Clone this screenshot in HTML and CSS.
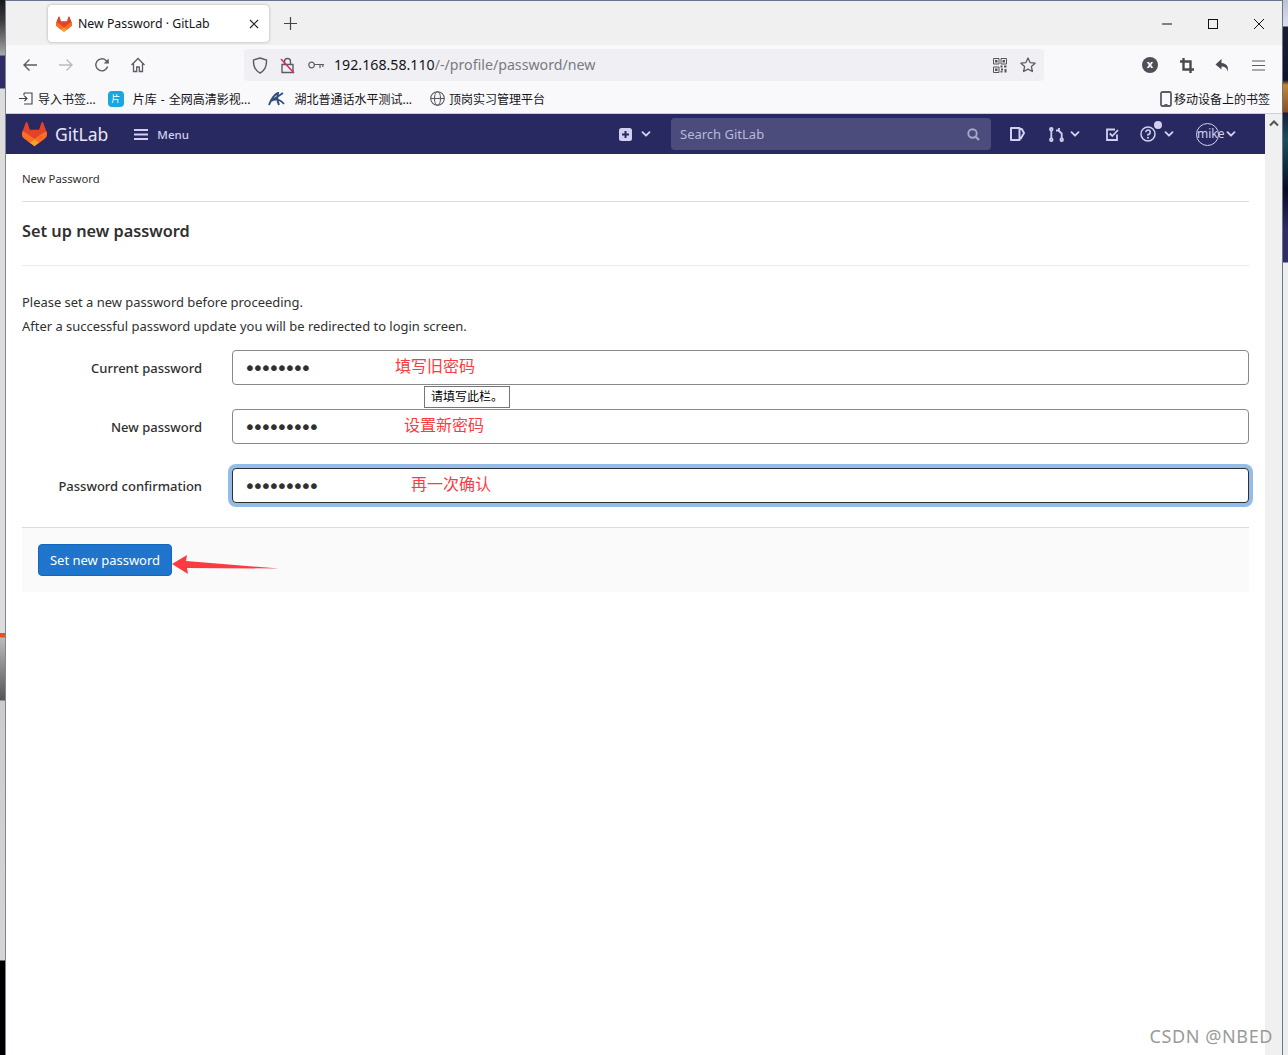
FILE: index.html
```html
<!DOCTYPE html>
<html lang="en">
<head>
  <meta charset="UTF-8" />
  <meta name="viewport" content="width=device-width, initial-scale=1.0"/>
  <title>New Password · GitLab</title>
  <link rel="stylesheet" href="styles.css">
</head>
<body>
  <svg class="defs" width="0" height="0">
    <symbol id="tanuki" viewBox="0 0 25 24">
      <path fill="#E24329" d="M24.507 9.5l-.034-.09L21.082.562a.896.896 0 00-1.694.091l-2.29 7.01H7.825L5.535.653a.898.898 0 00-1.694-.09L.451 9.411.416 9.5a6.297 6.297 0 002.09 7.278l.012.01.03.022 5.16 3.867 2.56 1.935 1.554 1.176a1.051 1.051 0 001.268 0l1.555-1.176 2.56-1.935 5.197-3.89.014-.01A6.297 6.297 0 0024.507 9.5z"/>
      <path fill="#FC6D26" d="M24.507 9.5l-.034-.09a11.44 11.44 0 00-4.56 2.051l-7.447 5.632 4.742 3.584 5.197-3.89.014-.01A6.297 6.297 0 0024.507 9.5z"/>
      <path fill="#FCA326" d="M7.707 20.677l2.56 1.935 1.555 1.176a1.051 1.051 0 001.268 0l1.555-1.176 2.56-1.935-4.743-3.584-4.755 3.584z"/>
      <path fill="#FC6D26" d="M5.01 11.461a11.43 11.43 0 00-4.56-2.05L.416 9.5a6.297 6.297 0 002.09 7.278l.012.01.03.022 5.16 3.867 4.745-3.584-7.444-5.632z"/>
    </symbol>
    <symbol id="chev" viewBox="0 0 10 10">
      <path d="M1.5 3.2L5 6.7l3.5-3.5" fill="none" stroke="currentColor" stroke-width="1.9" stroke-linecap="round" stroke-linejoin="round"/>
    </symbol>
  </svg>

  <div class="desktop">
    <div class="strip strip-left"></div>

    <div class="window">
      <!-- tab strip -->
      <div class="tabbar">
        <div class="tab">
          <svg class="tab-logo" width="16" height="16"><use href="#tanuki"/></svg>
          <span class="tab-title">New Password · GitLab</span>
          <svg class="tab-close" width="10" height="10" viewBox="0 0 10 10"><path d="M1 1l8 8M9 1l-8 8" stroke="#222" stroke-width="1.1"/></svg>
        </div>
        <svg class="new-tab" width="13" height="13" viewBox="0 0 13 13"><path d="M6.5 0v13M0 6.5h13" stroke="#444" stroke-width="1.2"/></svg>
        <div class="win-btns">
          <svg width="10" height="10" viewBox="0 0 10 10"><path d="M0 5h10" stroke="#111" stroke-width="1"/></svg>
          <svg width="10" height="10" viewBox="0 0 10 10"><rect x=".5" y=".5" width="9" height="9" fill="none" stroke="#111"/></svg>
          <svg width="10" height="10" viewBox="0 0 10 10"><path d="M0 0l10 10M10 0L0 10" stroke="#111" stroke-width="1"/></svg>
        </div>
      </div>

      <!-- toolbar -->
      <div class="toolbar">
        <div class="nav-btns">
          <svg width="16" height="16" viewBox="0 0 16 16"><path d="M15 8H2M7.5 2.5L2 8l5.5 5.5" fill="none" stroke="#5b5b66" stroke-width="1.4"/></svg>
          <svg width="16" height="16" viewBox="0 0 16 16"><path d="M1 8h13M8.500 2.500L14 8l-5.500 5.500" fill="none" stroke="#b9b9c0" stroke-width="1.4"/></svg>
          <svg width="16" height="16" viewBox="0 0 16 16"><path d="M13.600 9.500A6 6 0 1 1 12 3.500L14.500 6" fill="none" stroke="#5b5b66" stroke-width="1.4"/><path d="M14.700 1.500v5h-5z" fill="#5b5b66"/></svg>
          <svg width="16" height="16" viewBox="0 0 16 16"><path d="M1.500 8L8 1.500 14.500 8M3.500 6.500V14.500h3.200V10h2.600v4.500h3.200V6.500" fill="none" stroke="#5b5b66" stroke-width="1.3"/></svg>
        </div>
        <div class="urlbar">
          <svg width="16" height="17" viewBox="0 0 16 17"><path d="M8 1l6.500 2c.3 5.500-1.500 10.500-6.500 13C3 13.500 1.200 8.500 1.500 3z" fill="none" stroke="#5b5b66" stroke-width="1.4"/></svg>
          <svg class="url-lock" width="15" height="17" viewBox="0 0 15 17"><path d="M4.500 7V4.500a3 3 0 0 1 6 0V7M2 7.500h11v8H2z" fill="none" stroke="#5b5b66" stroke-width="1.4"/><path d="M1 2l13 14" stroke="#e22850" stroke-width="1.5"/></svg>
          <svg class="url-key" width="16" height="8" viewBox="0 0 16 8"><circle cx="3.600" cy="4" r="2.800" fill="none" stroke="#5b5b66" stroke-width="1.200"/><path d="M6.500 3.500H16M12 3.500V7M14.800 3.500V6" fill="none" stroke="#5b5b66" stroke-width="1.200"/></svg>
          <span class="url-text">192.168.58.110<span class="url-path">/-/profile/password/new</span></span>
          <svg class="url-qr" width="14" height="15" viewBox="0 0 14 15">
            <path d="M.5.5h5.500v5.500H.5zM8 .5h5.500v5.500H8zM.5 9h5.500v5.500H.5z" fill="none" stroke="#555" stroke-width="1"/>
            <path d="M2 2h2.500v2.500H2zM9.500 2H12v2.500H9.500zM2 10.500h2.500V13H2zM7.500 7.500h2v2h-2zM11 7.500h2.500v2H11zM8 10.500h2v2H8zM11.500 11h2v3.500h-2zM7.500 13h2v1.500h-2z" fill="#555"/>
          </svg>
          <svg class="url-star" width="16" height="16" viewBox="0 0 16 16"><path d="M8 1l2.100 4.600 5 .6-3.700 3.400 1 4.900L8 12.100l-4.400 2.400 1-4.900L.9 6.200l5-.6z" fill="none" stroke="#5b5b66" stroke-width="1.3" stroke-linejoin="round"/></svg>
        </div>
        <div class="tool-btns">
          <span class="ext-x">x</span>
          <svg width="14" height="15" viewBox="0 0 14 15"><path d="M3.500 0v11.500H14M0 3.500h10.500V15" fill="none" stroke="#4a4a52" stroke-width="2.400"/></svg>
          <svg width="15" height="15" viewBox="0 0 15 15"><path d="M6.500 1L.5 6.500l6 5V8.500c3.500 0 5.500 1.500 6 5 1.500-4.500-.5-8-6-8.500z" fill="#4a4a52"/></svg>
          <svg width="13" height="11" viewBox="0 0 13 11"><path d="M0 1h13M0 5.500h13M0 10h13" stroke="#5b5b66" stroke-width="1.200"/></svg>
        </div>
      </div>

      <!-- bookmarks -->
      <div class="bookmarks">
        <a class="bm bm-import">
          <svg width="14" height="13" viewBox="0 0 14 13"><path d="M5 1h8v11H5M5 3.500V1M0 6.500h8M5.500 4l2.500 2.500L5.500 9" fill="none" stroke="#444" stroke-width="1.100"/></svg>
          导入书签...
        </a>
        <a class="bm bm-film">
          <span class="bm-pk">片</span>
          片库 - 全网高清影视...
        </a>
        <a class="bm">
          <svg width="17" height="14" viewBox="0 0 17 14"><path d="M1 13C3 7 7 2 10 1c-1 4-1 8 1 12M15 1L3 9c4-2 9-2 13 3" fill="none" stroke="#2f4f7f" stroke-width="1.900"/></svg>
          湖北普通话水平测试...
        </a>
        <a class="bm bm-intern">
          <svg width="15" height="15" viewBox="0 0 15 15"><g fill="none" stroke="#5b5b66" stroke-width="1.100"><circle cx="7.500" cy="7.500" r="6.800"/><ellipse cx="7.500" cy="7.500" rx="3" ry="6.800"/><path d="M.7 7.500h13.600"/></g></svg>
          顶岗实习管理平台
        </a>
        <a class="bm bm-mobile">
          <svg width="12" height="16" viewBox="0 0 12 16"><rect x="1" y="1" width="10" height="14" rx="1.500" fill="none" stroke="#5b5b66" stroke-width="1.800"/><path d="M4.500 13.500h3" stroke="#5b5b66"/></svg>
          移动设备上的书签
        </a>
      </div>

      <div class="viewport">
        <div class="page">
          <!-- gitlab navbar -->
          <header class="navbar">
            <div class="brand">
              <svg width="25" height="24"><use href="#tanuki"/></svg>
              <span class="brand-name">GitLab</span>
            </div>
            <div class="menu">
              <svg width="14" height="11" viewBox="0 0 14 11"><path d="M0 1h14M0 5.500h14M0 10h14" stroke="#d1d0f0" stroke-width="2"/></svg>
              <span>Menu</span>
            </div>
            <div class="nav-right">
              <div class="nav-item create">
                <svg width="13" height="13" viewBox="0 0 13 13"><rect width="13" height="13" rx="2.500" fill="#d1d0f0"/><path d="M6.500 3v7M3 6.500h7" stroke="#292961" stroke-width="2"/></svg>
                <svg class="chev" width="10" height="10"><use href="#chev"/></svg>
              </div>
              <div class="search">
                <span>Search GitLab</span>
                <svg width="13" height="13" viewBox="0 0 13 13"><circle cx="5.500" cy="5.500" r="4.200" fill="none" stroke="#a9a8c8" stroke-width="1.900"/><path d="M8.700 8.700L12 12" stroke="#a9a8c8" stroke-width="2.200"/></svg>
              </div>
              <svg class="nav-issue" width="15" height="14" viewBox="0 0 15 14"><path d="M1 1h8.500v12H1zM9.500 2h2.300L14 6l-3.500 6" fill="none" stroke="#d1d0f0" stroke-width="2" stroke-linejoin="round"/></svg>
              <div class="nav-item mr">
                <svg width="15" height="15" viewBox="0 0 15 15"><g fill="none" stroke="#d1d0f0" stroke-width="1.800"><circle cx="2.300" cy="2.300" r="1.300"/><circle cx="2.300" cy="12.700" r="1.300"/><circle cx="12.700" cy="12.700" r="1.300"/><path d="M2.300 4v7M12.700 11V6.500L9.500 3.500M7 3.500h3V1"/></g></svg>
                <svg class="chev" width="10" height="10"><use href="#chev"/></svg>
              </div>
              <svg class="nav-todo" width="13" height="13" viewBox="0 0 13 13"><path d="M11 6.500V12H1V1.500h8" fill="none" stroke="#d1d0f0" stroke-width="1.800"/><path d="M3.800 5.500l2.500 2.500L12 2" fill="none" stroke="#d1d0f0" stroke-width="1.800"/></svg>
              <div class="nav-item help">
                <svg width="16" height="16" viewBox="0 0 16 16"><circle cx="8" cy="8" r="7" fill="none" stroke="#d1d0f0" stroke-width="1.500"/><path d="M5.800 6.300A2.200 2.200 0 1 1 8 8.500v1.200" fill="none" stroke="#d1d0f0" stroke-width="1.500"/><circle cx="8" cy="11.700" r="1" fill="#d1d0f0"/></svg>
                <span class="help-dot"></span>
                <svg class="chev" width="10" height="10"><use href="#chev"/></svg>
              </div>
              <div class="nav-item user">
                <span class="avatar">mike</span>
                <svg class="chev" width="10" height="10"><use href="#chev"/></svg>
              </div>
            </div>
          </header>

          <main class="content">
            <div class="breadcrumb">New Password</div>
            <h1 class="page-title">Set up new password</h1>
            <p class="intro">Please set a new password before proceeding.<br>After a successful password update you will be redirected to login screen.</p>

            <form class="pw-form">
              <div class="field">
                <label for="cur">Current password</label>
                <input id="cur" type="password" value="12345678">
              </div>
              <div class="field">
                <label for="new">New password</label>
                <input id="new" type="password" value="123456789">
              </div>
              <div class="field">
                <label for="conf">Password confirmation</label>
                <input id="conf" class="focused" type="password" value="123456789">
              </div>
              <div class="form-actions">
                <button type="button" class="btn-primary">Set new password</button>
              </div>

              <span class="note note-1">填写旧密码</span>
              <span class="note note-2">设置新密码</span>
              <span class="note note-3">再一次确认</span>
              <span class="tip">请填写此栏。</span>
              <svg class="arrow" width="108" height="20" viewBox="0 0 108 20"><path d="M0 10L15 1l-1 6 93 7.500L15 14l1 6z" fill="#fb3b3f"/></svg>
            </form>
          </main>
        </div>

        <div class="scrollbar">
          <svg width="10" height="7" viewBox="0 0 10 7"><path d="M1 5.500l4-4 4 4" fill="none" stroke="#555" stroke-width="2"/></svg>
        </div>
      </div>
    </div>

    <div class="strip strip-right"></div>
  </div>

  <span class="watermark">CSDN @NBED</span>
</body>
</html>
```

FILE: styles.css
```css
* {
  box-sizing: border-box;
}

html, body {
  margin: 0;
  padding: 0;
  height: 100%;
  overflow: hidden;
}

body {
  font-family: "Noto Sans", "Noto Sans CJK SC", sans-serif;
  color: #303030;
  background: #fff;
  position: relative;
}

.defs {
  display: block;
  height: 0;
}

.desktop {
  display: flex;
  height: 1055px;
}

/* bits of the desktop behind the browser window */
.strip {
  flex: none;
  width: 5px;
}

.strip-left {
  background:
    linear-gradient(#1a1a1a 0, #3a3a3a 20px, #777 40px, #aaa 55px, #2f2c66 56px, #2f2c66 88px, #ddd 89px, #ddd 633px, #e8501c 633px, #e8501c 637px, #bbb 638px, #555 700px, #ccc 701px, #d5d5d5 960px, #000 961px);
}

.strip-right {
  background:
    linear-gradient(#bcc4cc 0, #dde 26px, #1b2030 27px, #101428 80px, #c08a30 85px, #8a5020 112px, #181c38 113px, #1a5058 140px, #0a0a20 190px, #2f2c66 230px, #2f2c66 262px, #eee 263px);
}

.window {
  flex: 1;
  display: flex;
  flex-direction: column;
  border-top: 1px solid #67768e;
  border-left: 1px solid #7b8699;
  border-right: 1px solid #67768e;
  min-width: 0;
}

/* tab strip */
.tabbar {
  height: 44px;
  background: #f0f0f0;
  display: flex;
  align-items: center;
  padding-left: 42px;
  flex: none;
}

.tab {
  width: 221px;
  height: 37px;
  margin-top: 1px;
  background: #fff;
  border-radius: 4px;
  box-shadow: 0 0 3px rgba(0, 0, 0, 0.3);
  display: flex;
  align-items: center;
  padding: 0 10px 0 8px;
  font-size: 12.3px;
  color: #15141a;
}

.tab-title {
  margin-left: 6px;
  flex: 1;
}

.new-tab {
  margin-left: 15px;
}

.win-btns {
  margin-left: auto;
  margin-top: 1px;
  padding-right: 18px;
  display: flex;
  gap: 36px;
}

/* toolbar */
.toolbar {
  height: 37px;
  background: #f9f9fb;
  display: flex;
  align-items: center;
  flex: none;
  padding-top: 3px;
}

.nav-btns {
  width: 238px;
  padding-left: 16px;
  display: flex;
  gap: 20px;
  flex: none;
}

.urlbar {
  width: 800px;
  height: 32px;
  background: #f0f0f4;
  border-radius: 4px;
  display: flex;
  align-items: center;
  padding: 0 8px;
  flex: none;
}

.url-lock {
  margin-left: 12px;
}

.url-key {
  margin-left: 13px;
}

.url-text {
  margin-left: 10px;
  padding-bottom: 2px;
  font-size: 14.2px;
  color: #15141a;
  flex: 1;
}

.url-path {
  color: #7a7a82;
}

.url-qr {
  margin-right: 13px;
}

.tool-btns {
  flex: 1;
  display: flex;
  align-items: center;
  gap: 21.5px;
  padding-left: 98px;
}

.ext-x {
  width: 16px;
  height: 16px;
  border-radius: 50%;
  background: #4f4f57;
  color: #fff;
  font-size: 11px;
  font-weight: 700;
  line-height: 14px;
  text-align: center;
}

/* bookmarks */
.bookmarks {
  height: 32px;
  background: #f9f9fb;
  border-bottom: 1px solid #cfcfd8;
  display: flex;
  align-items: center;
  padding: 2px 0 0 13px;
  font-size: 12px;
  color: #15141a;
  flex: none;
}

.bm {
  display: flex;
  align-items: center;
  gap: 9px;
  margin-right: 18px;
  white-space: nowrap;
}

.bm-import {
  gap: 5px;
  margin-right: 12px;
}

.bm-film {
  word-spacing: 1px;
}

.bm-intern {
  gap: 4px;
}

.bm-pk {
  width: 16px;
  height: 16px;
  border-radius: 4px;
  background: #18a8e0;
  color: #fff;
  font-size: 9px;
  line-height: 16px;
  text-align: center;
}

.bm-mobile {
  margin-left: auto;
  margin-right: 12px;
  gap: 2px;
}

/* page area */
.viewport {
  flex: 1;
  display: flex;
  min-height: 0;
}

.page {
  flex: 1;
  min-width: 0;
}

.scrollbar {
  width: 17px;
  flex: none;
  background: #f0f0f0;
  padding: 6px 0 0 4px;
}

.scrollbar svg {
  display: block;
}

/* gitlab navbar */
.navbar {
  height: 40px;
  background: #292961;
  display: flex;
  align-items: center;
  padding-left: 16px;
  color: #d1d0f0;
}

.brand {
  display: flex;
  align-items: center;
  gap: 8px;
}

.brand-name {
  font-size: 17.5px;
  color: #e6e6f5;
}

.menu {
  margin-left: 26px;
  display: flex;
  align-items: center;
  gap: 9px;
  font-size: 11.5px;
  font-weight: 500;
}

.nav-right {
  margin-left: auto;
  display: flex;
  align-items: center;
  padding-right: 29px;
}

.nav-item {
  display: flex;
  align-items: center;
  gap: 6px;
  position: relative;
}

.create {
  gap: 9px;
}

.chev {
  color: #d1d0f0;
}

.search {
  width: 320px;
  height: 32px;
  margin-left: 20px;
  background: #4c4c7c;
  border-radius: 4px;
  display: flex;
  align-items: center;
  justify-content: space-between;
  padding: 0 11px 0 9px;
  font-size: 13px;
  color: #b9b8d8;
}

.nav-issue {
  margin-left: 19px;
}

.mr {
  margin-left: 24px;
}

.nav-todo {
  margin-left: 26px;
}

.help {
  margin-left: 21px;
  gap: 8px;
}

.help-dot {
  position: absolute;
  top: -5px;
  left: 14px;
  width: 8px;
  height: 8px;
  border-radius: 50%;
  background: #d1d0f0;
}

.user {
  margin-left: 22px;
  gap: 7px;
}

.avatar {
  width: 23px;
  height: 23px;
  border: 1px solid #d1d0f0;
  border-radius: 50%;
  font-size: 12px;
  line-height: 20px;
  white-space: nowrap;
}

/* content */
.content {
  padding: 0 16px;
}

.breadcrumb {
  height: 48px;
  line-height: 50px;
  font-size: 11.3px;
  color: #303030;
  border-bottom: 1px solid #dcdcde;
}

.page-title {
  height: 64px;
  margin: 0;
  line-height: 58px;
  font-size: 16.3px;
  font-weight: 600;
  border-bottom: 1px solid #ececef;
}

.intro {
  margin: 24px 0 12px;
  font-size: 12.95px;
  line-height: 24px;
}

.pw-form {
  position: relative;
}

.field {
  display: grid;
  grid-template-columns: 180px 1fr;
  column-gap: 30px;
  align-items: center;
  margin-bottom: 24px;
}

.field label {
  text-align: right;
  font-size: 13px;
  font-weight: 500;
}

.field input {
  height: 35px;
  width: 100%;
  padding: 0 11px;
  border: 1px solid #89888d;
  border-radius: 4px;
  background: #fff;
  color: #303030;
  font-family: "DejaVu Sans", sans-serif;
  font-size: 20px;
  letter-spacing: -3.8px;
  outline: none;
}

.field input.focused {
  border-color: #303030;
  box-shadow: 0 0 0 4px #93bde8;
}

.form-actions {
  height: 65px;
  padding: 16px;
  background: #fafafa;
  border-top: 1px solid #dcdcde;
}

.btn-primary {
  display: block;
  width: 134px;
  height: 32px;
  border: 1px solid #1068bf;
  border-radius: 4px;
  background: #1f75cb;
  color: #fff;
  font-family: inherit;
  font-size: 13px;
  padding: 0;
}

/* annotations drawn over the screenshot */
.note {
  position: absolute;
  font-size: 16px;
  line-height: 20px;
  color: #fb3b3f;
}

.note-1 {
  left: 373px;
  top: 6px;
}

.note-2 {
  left: 382px;
  top: 65px;
}

.note-3 {
  left: 389px;
  top: 124px;
}

.tip {
  position: absolute;
  left: 402px;
  top: 36px;
  width: 86px;
  height: 22px;
  border: 1px solid #767676;
  background: #fff;
  color: #000;
  font-size: 12px;
  line-height: 20px;
  padding-left: 6px;
}

.arrow {
  position: absolute;
  left: 150px;
  top: 204px;
}

.watermark {
  position: absolute;
  right: 15px;
  bottom: 7px;
  font-size: 18px;
  color: #9a9a9a;
  letter-spacing: 0.6px;
}
```
